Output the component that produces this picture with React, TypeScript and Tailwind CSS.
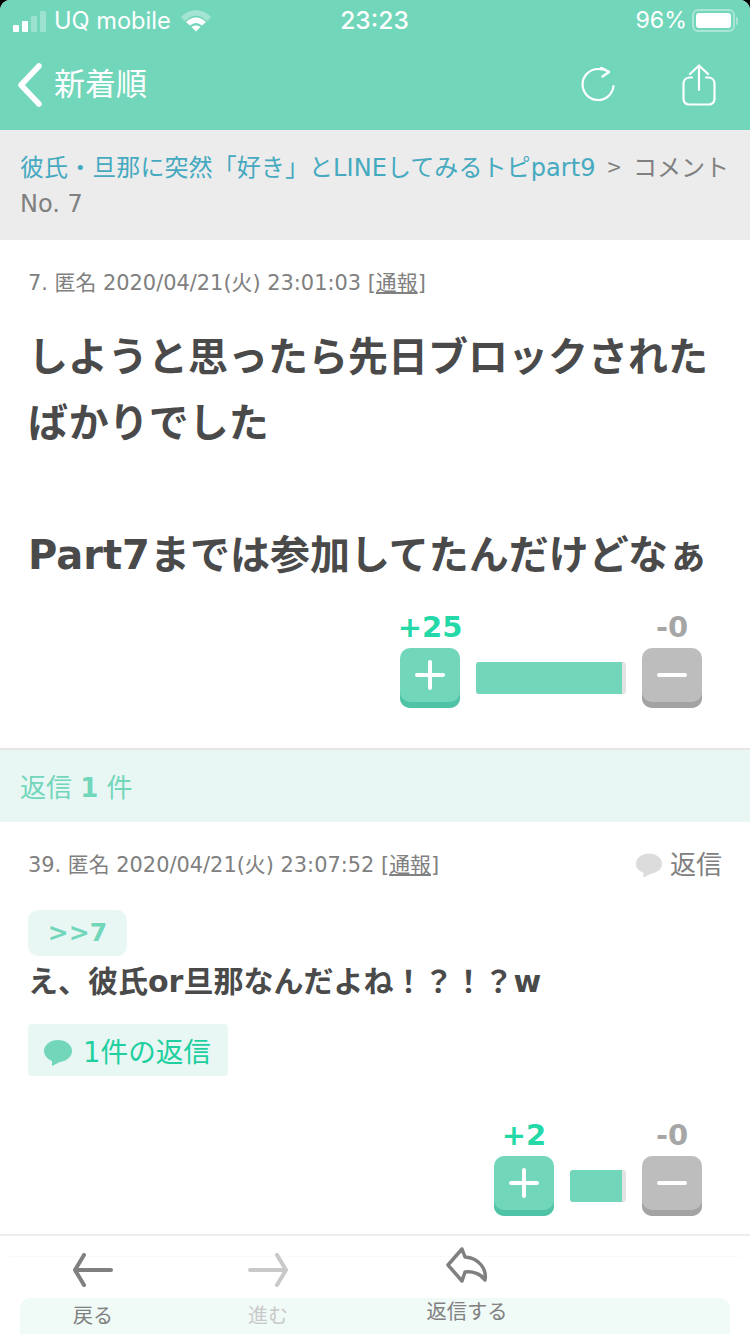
import React from "react";

const JP = "font-['DejaVu_Sans','Noto_Sans_CJK_JP',sans-serif]";

function Bubble({ className }: { className: string }) {
  return (
    <svg viewBox="0 0 28 26" className={className} fill="currentColor">
      <ellipse cx="14" cy="11" rx="14" ry="11" />
      <path d="M8 19 L8 26 L18 21 Z" />
    </svg>
  );
}

function VoteButton({ kind }: { kind: "plus" | "minus" }) {
  const plus = kind === "plus";
  return (
    <div className={`flex h-[60px] w-[60px] shrink-0 items-center justify-center rounded-[10px] pb-[6px] ${plus ? "bg-[#72d6bb] shadow-[inset_0_-6px_0_#4fc3a5]" : "bg-[#bdbdbd] shadow-[inset_0_-6px_0_#a3a3a3]"}`}>
      <svg viewBox="0 0 30 30" className="h-[30px] w-[30px]" stroke="#fff" strokeWidth="4" strokeLinecap="round">
        <path d="M2 15 H28" />
        {plus && <path d="M15 2 V28" />}
      </svg>
    </div>
  );
}

function Votes({ plus, barWidth }: { plus: string; barWidth: string }) {
  return (
    <div className="flex items-end justify-end gap-4">
      <div className="flex w-[60px] flex-col items-center">
        <span className="mt-px mb-[3px] whitespace-nowrap text-[29px] leading-[36px] font-bold text-[#25d8a8]">{plus}</span>
        <VoteButton kind="plus" />
      </div>
      <div className={`mb-[14px] flex h-8 items-stretch overflow-hidden rounded-[3px] bg-[#e3e3e3] pr-1 ${barWidth}`}>
        <div className="flex-1 bg-[#72d6bb]" />
      </div>
      <div className="flex w-[60px] flex-col items-center">
        <span className="mt-px mb-[3px] whitespace-nowrap text-[29px] leading-[36px] font-bold text-[#a6a6a6]">-0</span>
        <VoteButton kind="minus" />
      </div>
    </div>
  );
}

export default function App() {
  return (
    <div className={`relative h-[1334px] w-[750px] overflow-hidden bg-black ${JP}`}>
      <div className="flex h-full flex-col overflow-hidden rounded-[10px] bg-white">
        {/* status bar + nav */}
        <header className="h-[130px] shrink-0 bg-[#72d6bb] text-white">
          <div className="flex h-[40px] items-center justify-between pl-[13px] pr-[12px] pt-[2px]">
            <div className="flex flex-1 items-center">
              <div className="flex items-end gap-[3px]">
                <span className="h-[7px] w-[6px] rounded-[1px] bg-white" />
                <span className="h-[11px] w-[6px] rounded-[1px] bg-white" />
                <span className="h-[16px] w-[6px] rounded-[1px] bg-white/30" />
                <span className="h-[21px] w-[6px] rounded-[1px] bg-white/30" />
              </div>
              <span className="ml-[8px] font-['Inter',sans-serif] text-[23.6px] leading-none">UQ mobile</span>
              <svg viewBox="0 0 30 22" className="ml-[10px] h-[22px] w-[30px]">
                <path d="M0 7 C8 -2 22 -2 30 7 L26 11 C19 4 11 4 4 11 Z" fill="#fff" fillOpacity="0.35" />
                <path d="M5 12 C11 6 19 6 25 12 L21 15.5 C17 12 13 12 9 15.5 Z" fill="#fff" />
                <path d="M10.5 17 C13 15 17 15 19.5 17 L15 21.5 Z" fill="#fff" />
              </svg>
            </div>
            <span className="mr-[2px] mb-px font-['Inter',sans-serif] text-[24.6px] leading-none font-medium">23:23</span>
            <div className="flex flex-1 items-center justify-end">
              <span className="font-['Inter',sans-serif] text-[23.2px] leading-none">96%</span>
              <div className="ml-[5px] flex h-[23px] w-[43px] items-center rounded-[6px] border-2 border-white/40 p-[2px]">
                <div className="h-full w-full rounded-[3px] bg-white" />
              </div>
              <span className="ml-px h-[8px] w-[2px] rounded-r bg-white/40" />
            </div>
          </div>
          <div className="flex h-[90px] items-center pb-[1px]">
            <svg viewBox="0 0 26 44" className="ml-[17px] h-[44px] w-[26px]" fill="none" stroke="#fff" strokeWidth="5.5" strokeLinecap="round" strokeLinejoin="round">
              <path d="M22 3 L4 22 L22 41" />
            </svg>
            <span className="ml-[11px] text-[31px] leading-none">新着順</span>
            <svg viewBox="0 0 34 36" className="ml-[434px] h-[36px] w-[34px]" fill="none" stroke="#fff" strokeWidth="2.2" strokeLinecap="round" strokeLinejoin="round">
              <path d="M32.5 19 A15.5 15.5 0 1 1 17 2 C21 2 25 3 28 5" />
              <path d="M20 0.5 L28 5 L21.5 9.5" />
            </svg>
            <svg viewBox="0 0 34 42" className="ml-[67px] h-[42px] w-[34px]" fill="none" stroke="#fff" strokeWidth="2.2" strokeLinecap="round" strokeLinejoin="round">
              <path d="M17 26 V2 M8 10 L17 1.5 L26 10" />
              <path d="M10 13.5 H7 A6 6 0 0 0 1.5 19.5 V35 A5.5 5.5 0 0 0 7 40.5 H27 A5.5 5.5 0 0 0 32.5 35 V19.5 A6 6 0 0 0 27 13.5 H24" />
            </svg>
          </div>
        </header>

        {/* breadcrumb */}
        <div className="h-[110px] shrink-0 bg-[#ececec] px-5 pt-5 text-[24px] leading-[36px] text-[#808080]">
          <span className="tracking-[0.08px] text-[#45a9c0]">彼氏・旦那に突然「好き」とLINEしてみるトピpart9</span>
          <span className="mx-3 font-['Noto_Sans_CJK_JP',sans-serif] leading-none">&gt;</span>
          <span>コメント No. 7</span>
        </div>

        {/* comment */}
        <section className="h-[510px] shrink-0 border-b-2 border-[#e6e6e6] px-7">
          <p className="pt-[29px] text-[20.9px] leading-[28px] text-[#808080]">
            7. 匿名 2020/04/21(火) 23:01:03 [<span className="underline">通報</span>]
          </p>
          <p className="mt-[27px] text-[40px] leading-[66px] font-bold text-[#4a4a4a]">
            しようと思ったら先日ブロックされたばかりでした
            <br />
            <br />
            Part7までは参加してたんだけどなぁ
          </p>
          <div className="mt-[20px] pr-5">
            <Votes plus="+25" barWidth="w-[150px]" />
          </div>
        </section>

        {/* replies header */}
        <div className="flex h-[72px] shrink-0 items-center bg-[#e9f7f4] px-5 pt-1 text-[26px] text-[#72d6bb]">
          返信&nbsp;<b>1</b>&nbsp;件
        </div>

        {/* reply */}
        <section className="relative flex-1 px-7">
          <div className="flex items-center justify-between pt-[24px]">
            <p className="text-[20.9px] leading-[38px] text-[#808080]">
              39. 匿名 2020/04/21(火) 23:07:52 [<span className="underline">通報</span>]
            </p>
            <div className="flex items-center text-[26px] leading-[38px] text-[#808080]">
              <Bubble className="mr-[8px] h-[25px] w-[26px] text-[#dcdcdc]" />
              返信
            </div>
          </div>
          <div className="mt-[26px] flex h-[46px] w-[99px] items-center justify-center rounded-[10px] bg-[#e9f7f4] text-[25px] font-bold text-[#72d6bb]">
            &gt;&gt;7
          </div>
          <p className="mt-[4px] text-[30px] leading-[44px] font-bold text-[#4a4a4a]">え、彼氏or旦那なんだよね！？！？w</p>
          <div className="mt-[20px] flex h-[52px] w-[200px] items-center rounded-[4px] bg-[#e9f7f4] pl-4 pt-[6px] text-[27.6px] text-[#1fcf9f]">
            <Bubble className="mr-[11px] h-[26px] w-[28px] text-[#72d6bb]" />
            1件の返信
          </div>
          <div className="mt-[40px] pr-5">
            <Votes plus="+2" barWidth="w-[56px]" />
          </div>
        </section>

        {/* bottom toolbar */}
        <nav className="absolute inset-x-0 bottom-0 h-[100px] border-t-2 border-[#ececec] bg-white">
          <div className="absolute inset-x-[10px] top-[20px] h-px bg-[#fafafa]" />
          <div className="absolute inset-x-5 bottom-0 h-[36px] rounded-t-[10px] bg-[#f0faf7]" />
          <div className="relative flex h-full text-[20px]">
            <div className="ml-[73px] flex w-[40px] flex-col items-center text-[#808080]">
              <svg viewBox="0 0 40 34" className="mt-[17px] h-[34px] w-[40px]" fill="none" stroke="currentColor" strokeWidth="4" strokeLinecap="round" strokeLinejoin="round">
                <path d="M38 17 H2 M11 2 L2 17 L11 32" />
              </svg>
              <span className="mt-[15px] whitespace-nowrap leading-[28px]">戻る</span>
            </div>
            <div className="ml-[135px] flex w-[40px] flex-col items-center text-[#c9c9c9]">
              <svg viewBox="0 0 40 34" className="mt-[17px] h-[34px] w-[40px]" fill="none" stroke="currentColor" strokeWidth="4" strokeLinecap="round" strokeLinejoin="round">
                <path d="M2 17 H38 M29 2 L38 17 L29 32" />
              </svg>
              <span className="mt-[15px] whitespace-nowrap leading-[28px]">進む</span>
            </div>
            <div className="ml-[138px] flex w-[82px] flex-col items-center text-[#808080]">
              <svg viewBox="0 0 42 36" className="mt-[11px] h-[36px] w-[42px]" fill="none" stroke="currentColor" strokeWidth="3.5" strokeLinecap="round" strokeLinejoin="round">
                <path d="M16 2 L2 18 L16 34 L19 25 C27 24 35 27 39 33 C41 22 33 11 19 10 Z" />
              </svg>
              <span className="mt-[15px] whitespace-nowrap text-[20.3px] leading-[28px]">返信する</span>
            </div>
          </div>
        </nav>
      </div>
    </div>
  );
}
